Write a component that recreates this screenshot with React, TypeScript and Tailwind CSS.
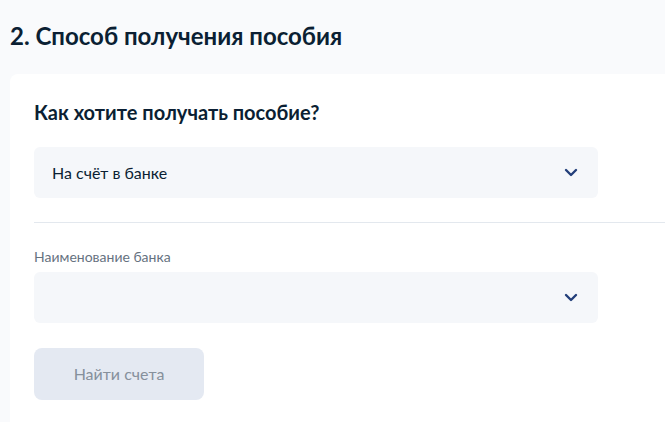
function Chevron() {
  return (
    <svg width="14" height="9" viewBox="0 0 14 9" fill="none">
      <path d="M2 2l5 5 5-5" stroke="#233f7a" strokeWidth="2.4" strokeLinecap="round" strokeLinejoin="round" />
    </svg>
  );
}

function Select({ value }: { value?: string }) {
  return (
    <div className="flex h-[51px] w-[564px] items-center justify-between rounded-md bg-[#f5f7fa] pl-[18px] pr-[20px]">
      <span className="text-[16px] text-[#0b1f33]">{value}</span>
      <Chevron />
    </div>
  );
}

export default function App() {
  return (
    <div className="h-[422px] overflow-hidden bg-[#f9fafc] pl-[10px] font-['Lato','Noto_Sans',sans-serif]">
      <h2 className="pt-[20px] text-[24px] font-bold leading-[32px] text-[#0b1f33]">2. Способ получения пособия</h2>
      <div className="mt-[22px] h-[400px] rounded-tl-lg bg-white pl-[24px] pt-[24px]">
        <h3 className="text-[20px] font-bold leading-[28px] text-[#0b1f33]">Как хотите получать пособие?</h3>
        <div className="mt-[21px]">
          <Select value="На счёт в банке" />
        </div>
        <div className="mt-[24px] h-px bg-[#e3e8ee]" />
        <div className="mt-[26px] text-[14px] leading-[16px] text-[#66727f]">Наименование банка</div>
        <div className="mt-[7px]">
          <Select />
        </div>
        <button className="mt-[25px] flex h-[52px] w-[170px] items-center justify-center rounded-lg bg-[#e4e9f2] text-[16px] text-[#86909c]">
          Найти счета
        </button>
      </div>
    </div>
  );
}
